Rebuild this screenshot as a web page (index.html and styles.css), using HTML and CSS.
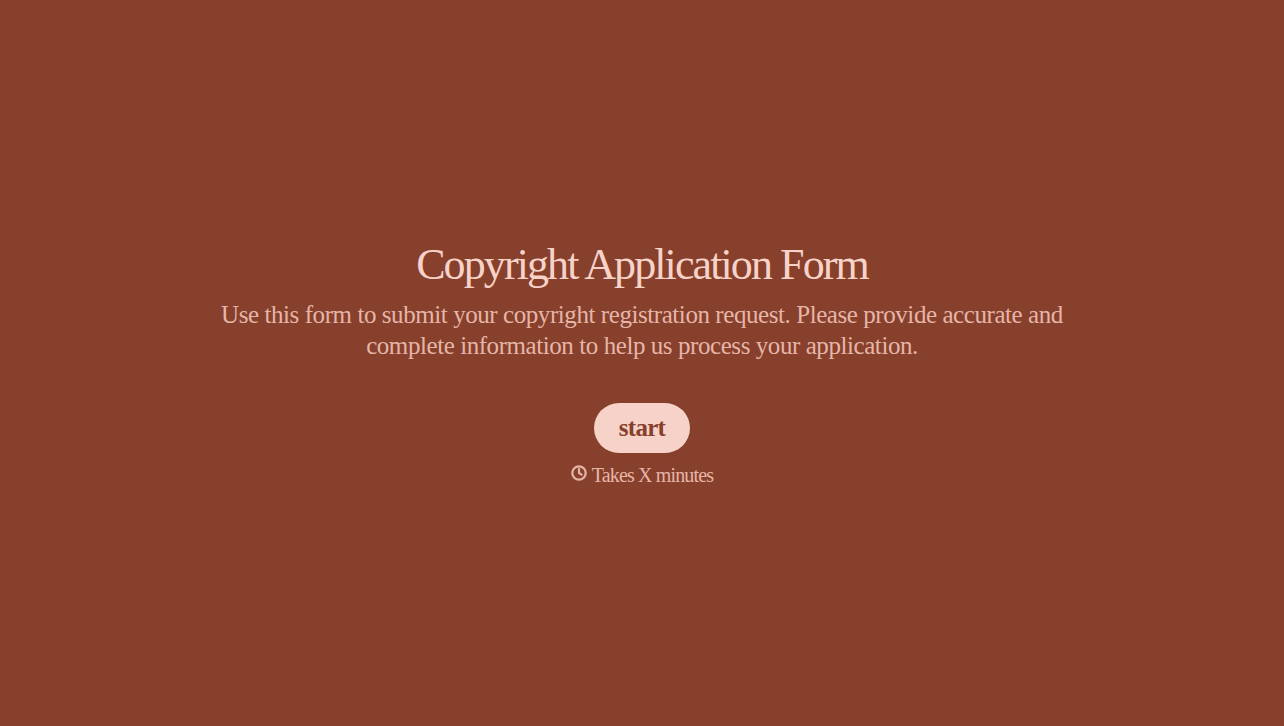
FILE: index.html
```html
<!DOCTYPE html>
<html lang="en">
<head>
  <meta charset="UTF-8">
  <title>Copyright Application Form</title>
  <meta name="viewport" content="width=device-width, initial-scale=1.0">
  <link rel="stylesheet" href="styles.css">
</head>
<body>
  <main class="welcome">
    <h1>Copyright Application Form</h1>
    <p class="intro">Use this form to submit your copyright registration request. Please provide accurate and complete information to help us process your application.</p>
    <button class="start-btn">start</button>
    <div class="time-note">
      <svg width="16" height="16" viewBox="0 0 16 16" fill="none" stroke="currentColor" stroke-width="2.2" stroke-linecap="round" stroke-linejoin="round">
        <circle cx="8" cy="8" r="6.7"></circle>
        <path d="M8 4.2V8l2.6 1.6"></path>
      </svg>
      <span>Takes X minutes</span>
    </div>
  </main>
</body>
</html>
```

FILE: styles.css
```css
html, body {
  height: 100%;
}

body {
  margin: 0;
  background: #87402b;
  color: #f7d2c9;
  font-family: "Liberation Serif", serif;
}

.welcome {
  height: 100%;
  display: flex;
  flex-direction: column;
  align-items: center;
  justify-content: center;
  text-align: center;
  padding-bottom: 2px;
  box-sizing: border-box;
}

h1 {
  margin: 0 0 8px;
  font-size: 44px;
  font-weight: 400;
  line-height: 53px;
  letter-spacing: -1.9px;
}

.intro {
  margin: 0 0 42px;
  width: 860px;
  font-size: 25px;
  line-height: 31px;
  letter-spacing: -0.43px;
  color: #e6b5a9;
}

.start-btn {
  padding: 0 25px;
  height: 50px;
  border: none;
  border-radius: 25px;
  background: #f7d2c9;
  color: #87402b;
  font-family: inherit;
  font-size: 25px;
  font-weight: 700;
  letter-spacing: -0.7px;
}

.time-note {
  margin-top: 11px;
  display: flex;
  align-items: center;
  gap: 5px;
  font-size: 20px;
  letter-spacing: -0.85px;
  color: #e6b5a9;
}

.time-note svg {
  margin-top: -5px;
}
```
